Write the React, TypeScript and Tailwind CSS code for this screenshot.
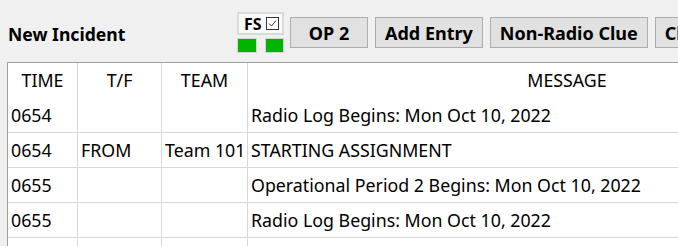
const rows = [
  { time: "0654", tf: "", team: "", msg: "Radio Log Begins: Mon Oct 10, 2022" },
  { time: "0654", tf: "FROM", team: "Team 101", msg: "STARTING ASSIGNMENT" },
  { time: "0655", tf: "", team: "", msg: "Operational Period 2 Begins: Mon Oct 10, 2022" },
  { time: "0655", tf: "", team: "", msg: "Radio Log Begins: Mon Oct 10, 2022" },
  { time: "", tf: "", team: "", msg: "" },
];

const cols = "grid grid-cols-[70px_84px_86px_638px]";

function Btn({ label }: { label: string }) {
  return (
    <button className="shrink-0 h-[31px] px-[9px] border border-[#adadad] bg-[#e1e1e1] text-[18px] font-bold text-black whitespace-nowrap leading-none">
      {label}
    </button>
  );
}

export default function App() {
  return (
    <div
      className="w-[678px] h-[246px] overflow-hidden bg-[#f0f0f0] text-black"
      style={{ fontFamily: '"Noto Sans", "Open Sans", sans-serif' }}
    >
      {/* Toolbar */}
      <div className="h-[62px] flex items-start pl-2 overflow-hidden">
        <div className="shrink-0 w-[229px] pt-[21px] text-[17.6px] font-bold">New Incident</div>
        <div className="shrink-0 mt-[12px] w-[47px] flex flex-col gap-[3px]">
          <div className="h-[23px] bg-[#f9f9f9] border-2 border-[#dadada] flex items-center justify-between pl-[5px] pr-[3px]">
            <span className="text-[16px] font-bold leading-none">FS</span>
            <svg width="13" height="13" viewBox="0 0 13 13">
              <rect x="0.5" y="0.5" width="12" height="12" fill="#fff" stroke="#333" />
              <path d="M3 6.5 L5.5 9 L10 3.5" fill="none" stroke="#333" strokeWidth="1" />
            </svg>
          </div>
          <div className="flex justify-between">
            <div className="w-[20px] h-[15px] bg-[#00b400] border border-[#d4d4d4]" />
            <div className="w-[19px] h-[15px] bg-[#00b400] border border-[#d4d4d4]" />
          </div>
        </div>
        <div className="shrink-0 mt-[17px] ml-[6px] flex gap-[7px]">
          <button className="shrink-0 w-[78px] h-[31px] border border-[#adadad] bg-[#e1e1e1] text-[18px] font-bold leading-none">
            OP 2
          </button>
          <Btn label="Add Entry" />
          <Btn label="Non-Radio Clue" />
          <Btn label="Clue Report" />
        </div>
      </div>

      {/* Log table */}
      <div className="ml-[7px] border-l border-t border-[#a0a0a0] bg-white overflow-hidden text-[17.8px]">
        <div className={`${cols} h-[35px] items-center`}>
          <div className="border-r border-[#d8d8d8] h-full flex items-center justify-center">TIME</div>
          <div className="border-r border-[#d8d8d8] h-full flex items-center justify-center">T/F</div>
          <div className="border-r border-[#d8d8d8] h-full flex items-center justify-center">TEAM</div>
          <div className="h-full flex items-center justify-center">MESSAGE</div>
        </div>
        {rows.map((r, i) => (
          <div key={i} className={`${cols} h-[35px] border-b border-[#d8d8d8]`}>
            <div className="border-r border-[#d8d8d8] pl-[3px] flex items-center whitespace-nowrap">{r.time}</div>
            <div className="border-r border-[#d8d8d8] pl-[3px] flex items-center whitespace-nowrap">{r.tf}</div>
            <div className="border-r border-[#d8d8d8] pl-[3px] flex items-center whitespace-nowrap">{r.team}</div>
            <div className="pl-[3px] flex items-center whitespace-nowrap">{r.msg}</div>
          </div>
        ))}
      </div>
    </div>
  );
}
